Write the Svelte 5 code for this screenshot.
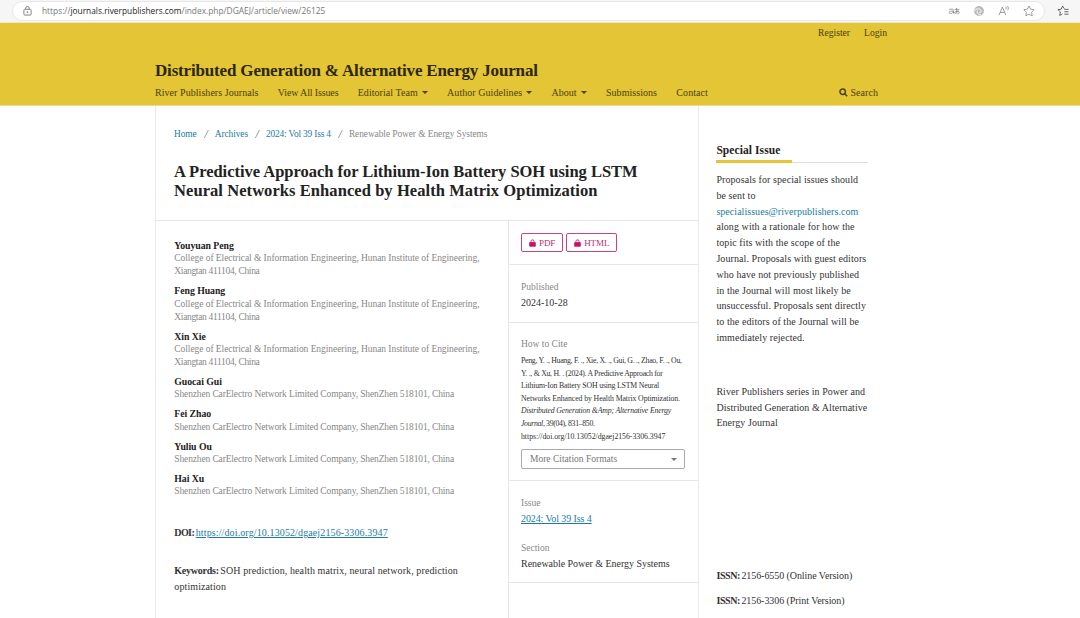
<script lang="ts">
	type Author = { name: string; lines: string[] };

	const hunan = ['College of Electrical & Information Engineering, Hunan Institute of Engineering,', 'Xiangtan 411104, China'];
	const shenzhen = ['Shenzhen CarElectro Network Limited Company, ShenZhen 518101, China'];

	const authors: Author[] = [
		{ name: 'Youyuan Peng', lines: hunan },
		{ name: 'Feng Huang', lines: hunan },
		{ name: 'Xin Xie', lines: hunan },
		{ name: 'Guocai Gui', lines: shenzhen },
		{ name: 'Fei Zhao', lines: shenzhen },
		{ name: 'Yuliu Ou', lines: shenzhen },
		{ name: 'Hai Xu', lines: shenzhen }
	];

	const nav = [
		{ label: 'River Publishers Journals', menu: false },
		{ label: 'View All Issues', menu: false },
		{ label: 'Editorial Team', menu: true },
		{ label: 'Author Guidelines', menu: true },
		{ label: 'About', menu: true },
		{ label: 'Submissions', menu: false },
		{ label: 'Contact', menu: false }
	];

	const galleys = ['PDF', 'HTML'];
	const crumbs = ['Home', 'Archives', '2024: Vol 39 Iss 4'];

	const proposal = [
		'along with a rationale for how the',
		'topic fits with the scope of the',
		'Journal. Proposals with guest editors',
		'who have not previously published',
		'in the Journal will most likely be',
		'unsuccessful. Proposals sent directly',
		'to the editors of the Journal will be',
		'immediately rejected.'
	];
</script>

<div class="page">
	<div class="browser">
		<div class="address">
			<svg class="lock" viewBox="0 0 10 11" aria-hidden="true">
				<rect x="1" y="3.6" width="8" height="6.4" rx="1" />
				<path d="M3 3.6V2.4a2 2 0 0 1 4 0v1.2" />
				<circle cx="5" cy="6.8" r=".6" />
			</svg>
			<span class="url">https://<b>journals.riverpublishers.com</b>/index.php/DGAEJ/article/view/26125</span>
			<div class="tools">
				<svg viewBox="0 0 12 12" aria-hidden="true">
					<path d="M1.2 4.2h3.2c1 0 1 .8 1 1.4v3M5.2 6.2H2.8c-2.2 0-2 2.4-.4 2.4 1.4 0 2.8-.8 2.8-2M6.6 4.4h4.6M8.6 3v3.2c0 2-2 3-2.2 1.4-.1-1.2 4.8-2.3 4.8 0 0 1-.8 1.4-1.8 1.4M10.2 5.4c-.4 1.6-1.4 2.6-2.4 3" />
				</svg>
				<svg viewBox="0 0 12 12" aria-hidden="true">
					<circle class="disc" cx="6" cy="6" r="4.9" />
					<path class="swirl" d="M1.6 5.6c1.6-2.4 6.2-2.4 6.6.4.2 1.6-1.2 1.8-2 1.2M4.6 5.6c-1.2 2 .4 4.4 3.4 4.2" />
				</svg>
				<svg viewBox="0 0 12 12" aria-hidden="true">
					<path d="M1 10.2 4.4 2l3.4 8.2M2.2 7.4h4.4M7.6 1.8c.8.6.8 1.8.2 2.6M9.4 1c1.2 1.2 1.2 3 .2 4.2" />
				</svg>
				<svg viewBox="0 0 12 12" aria-hidden="true">
					<path d="m6 .9 1.6 3.3 3.6.5-2.6 2.5.6 3.6L6 9.1l-3.2 1.7.6-3.6L.8 4.7l3.6-.5z" />
				</svg>
			</div>
		</div>
		<svg class="favorites" viewBox="0 0 12 12" aria-hidden="true">
			<path d="M7.4 3.8 5.6 1 4.2 4.2.9 4.6l2.5 2.3-.7 3.5 2.7-1.5M7.4 4.4h4.1M7.4 6.8h4.1M7.4 9.2h4.1" />
		</svg>
	</div>

	<header>
		<div class="wrap">
			<div class="account"><a href="#register">Register</a><a href="#login">Login</a></div>
			<div class="brand">Distributed Generation &amp; Alternative Energy Journal</div>
			<nav>
				{#each nav as item}
					<a href="#nav">{item.label}{#if item.menu}<i class="caret"></i>{/if}</a>
				{/each}
				<a class="search" href="#search">
					<svg viewBox="0 0 10 10" aria-hidden="true"><circle cx="4.1" cy="4.1" r="3" /><path d="m6.4 6.4 2.7 2.7" /></svg>Search
				</a>
			</nav>
		</div>
	</header>

	<div class="wrap content">
		<main>
			<div class="top">
				<div class="crumbs">
					{#each crumbs as crumb}
						<a href="#crumb">{crumb}</a>
						<svg class="slash" viewBox="0 0 18 16" aria-hidden="true"><path d="m7.4 12 4-8" /></svg>
					{/each}
					<span>Renewable Power &amp; Energy Systems</span>
				</div>
				<h1>
					<span>A Predictive Approach for Lithium-Ion Battery SOH using LSTM</span>
					<span>Neural Networks Enhanced by Health Matrix Optimization</span>
				</h1>
			</div>

			<div class="row">
				<article>
					<ul class="authors">
						{#each authors as author}
							<li>
								<strong>{author.name}</strong>
								{#each author.lines as line}
									<span class:short={line.length < 30} class:single={author.lines.length === 1}>{line}</span>
								{/each}
							</li>
						{/each}
					</ul>
					<div class="doi"><b>DOI:</b> <a href="#doi">https://doi.org/10.13052/dgaej2156-3306.3947</a></div>
					<div class="keywords"><b>Keywords:</b> SOH prediction, health matrix, neural network, prediction<br />optimization</div>
				</article>

				<aside class="details">
					<section class="galleys">
						{#each galleys as galley}
							<a href="#galley">
								<svg viewBox="0 0 8 9" aria-hidden="true"><path class="body" d="M.8 4h6.4v4.2H.8z" /><path class="shackle" d="M2.2 4V2.7a1.8 1.8 0 0 1 3.6 0V4" /></svg>{galley}
							</a>
						{/each}
					</section>
					<section class="published">
						<h2>Published</h2>
						<p>2024-10-28</p>
					</section>
					<section class="cite">
						<h2>How to Cite</h2>
						<div class="citation">
							<div>Peng, Y. ., Huang, F. ., Xie, X. ., Gui, G. ., Zhao, F. ., Ou,</div>
							<div>Y. ., &amp; Xu, H. . (2024). A Predictive Approach for</div>
							<div>Lithium-Ion Battery SOH using LSTM Neural</div>
							<div>Networks Enhanced by Health Matrix Optimization.</div>
							<div><em>Distributed Generation &amp;Amp; Alternative Energy</em></div>
							<div><em>Journal</em>, 39(04), 831–850.</div>
							<div>https://doi.org/10.13052/dgaej2156-3306.3947</div>
						</div>
						<button>More Citation Formats<i class="caret"></i></button>
					</section>
					<section class="issue">
						<h2>Issue</h2>
						<p><a href="#issue">2024: Vol 39 Iss 4</a></p>
						<h2 class="second">Section</h2>
						<p>Renewable Power &amp; Energy Systems</p>
					</section>
				</aside>
			</div>
		</main>

		<aside class="sidebar">
			<h3>Special Issue</h3>
			<p>
				Proposals for special issues should<br />be sent to<br />
				<a href="#mail">specialissues@riverpublishers.com</a>
				{#each proposal as line}
					<br />{line}
				{/each}
			</p>
			<p class="series">River Publishers series in Power and<br />Distributed Generation &amp; Alternative<br />Energy Journal</p>
			<p class="issn"><b>ISSN:</b> 2156-6550 (Online Version)</p>
			<p class="issn"><b>ISSN:</b> 2156-3306 (Print Version)</p>
		</aside>
	</div>
</div>

<style>
	:global(body) {
		background: #fff;
	}

	.page {
		width: 1080px;
		height: 618px;
		overflow: hidden;
		display: flex;
		flex-direction: column;
		font: 10px/16px 'Liberation Serif', serif;
		color: #333;
		white-space: nowrap;
	}

	.page * {
		box-sizing: border-box;
	}

	a {
		color: #1c7ba3;
		text-decoration: none;
	}

	h1,
	h2,
	h3,
	p,
	ul {
		margin: 0;
		padding: 0;
	}

	svg {
		fill: none;
		stroke: currentColor;
		flex: none;
	}

	.browser {
		height: 23px;
		flex: none;
		display: flex;
		align-items: flex-start;
		background: #f6f6f6;
		padding: 1px 11px 0 12px;
		border-bottom: 1px solid #eee8cf;
	}

	.address {
		width: 1033px;
		height: 20px;
		display: flex;
		align-items: center;
		padding: 0 9px 0 10px;
		background: #fff;
		border: 1px solid #e8e8e8;
		border-radius: 10px;
		color: #777;
	}

	.lock {
		width: 9px;
		height: 10px;
	}

	.url {
		margin-left: 10px;
		font: 8.35px/18px 'Open Sans', sans-serif;
		color: #777;
	}

	.url b {
		font-weight: 400;
		color: #222;
	}

	.tools {
		margin-left: auto;
		display: flex;
		gap: 13px;
		color: #888;
	}

	.tools svg,
	.favorites {
		width: 12px;
		height: 12px;
		stroke-width: 0.8;
	}

	.disc {
		fill: #bbb;
		stroke: none;
	}

	.tools .swirl {
		stroke: #fff;
		stroke-width: 1;
	}

	.favorites {
		margin: 4px 0 0 12px;
		color: #444;
	}

	header {
		height: 83px;
		flex: none;
		background: #e3c536;
		border-bottom: 1px solid #eadb93;
	}

	header a {
		color: #4b4112;
	}

	.wrap {
		margin-left: 155px;
		width: 732px;
	}

	.account {
		display: flex;
		justify-content: flex-end;
		gap: 14px;
		padding-top: 2px;
		font-size: 9.6px;
	}

	.brand {
		margin-top: 20px;
		font-size: 17px;
		line-height: 20px;
		font-weight: 700;
		letter-spacing: -0.17px;
		color: #2d2708;
	}

	nav {
		display: flex;
		gap: 19.3px;
		margin-top: 4px;
		padding-right: 9px;
		letter-spacing: 0.05px;
	}

	nav a:nth-child(2) {
		letter-spacing: -0.14px;
	}

	.caret {
		display: inline-block;
		margin-left: 4px;
		border: 3px solid transparent;
		border-top-color: currentColor;
		border-bottom: 0;
		vertical-align: 2px;
	}

	.search {
		margin-left: auto;
	}

	.search svg {
		width: 9px;
		height: 9px;
		margin-right: 2px;
		stroke-width: 1.7;
		vertical-align: -1px;
	}

	.content {
		flex: 1;
		display: flex;
	}

	main {
		width: 544px;
		display: flex;
		flex-direction: column;
		border: solid #e9e9e9;
		border-width: 0 1px;
	}

	.top {
		height: 115px;
		flex: none;
		padding: 20px 18px 0;
		border-bottom: 1px solid #e6e6e6;
	}

	.crumbs {
		display: flex;
		color: #888;
		font-size: 9.4px;
		letter-spacing: -0.06px;
	}

	.crumbs a:nth-of-type(3) {
		letter-spacing: -0.17px;
	}

	.slash {
		width: 18px;
		height: 16px;
		stroke-width: 0.8;
	}

	h1 {
		margin-top: 20px;
		font-size: 16.5px;
		line-height: 19px;
		color: #222;
	}

	h1 span {
		display: block;
		letter-spacing: -0.02px;
	}

	h1 span + span {
		letter-spacing: 0.07px;
	}

	.row {
		flex: 1;
		display: flex;
	}

	article {
		width: 352px;
		flex: none;
		padding: 18px 0 0 18.3px;
	}

	.authors {
		list-style: none;
		display: flex;
		flex-direction: column;
		gap: 5.8px;
		line-height: 13.2px;
	}

	.authors li {
		display: flex;
		flex-direction: column;
		color: #888;
		font-size: 9.5px;
		letter-spacing: -0.06px;
	}

	.authors .short {
		letter-spacing: -0.33px;
	}

	.authors .single {
		letter-spacing: -0.135px;
	}

	.authors strong {
		font-size: 9.8px;
		color: #222;
	}

	.doi {
		margin-top: 27px;
		letter-spacing: 0.12px;
	}

	.doi b {
		letter-spacing: -0.6px;
		margin-right: -1px;
	}

	.doi a,
	.issue a {
		text-decoration: underline;
	}

	.keywords {
		margin-top: 22px;
		letter-spacing: 0.1px;
	}

	.keywords b {
		letter-spacing: -0.25px;
		margin-right: -1px;
	}

	.details {
		flex: 1;
		border-left: 1px solid #e6e6e6;
	}

	.details section {
		padding-left: 12px;
		border-bottom: 1px solid #e6e6e6;
	}

	.details .galleys {
		height: 44px;
		display: flex;
		gap: 3px;
		padding-top: 12px;
	}

	.galleys a {
		height: 19px;
		display: flex;
		align-items: center;
		padding: 0 7px;
		border: 1px solid #c8437f;
		border-radius: 2px;
		color: #b7306f;
		font-size: 9px;
		letter-spacing: -0.1px;
	}

	.galleys svg {
		width: 7px;
		height: 8px;
		margin-right: 3px;
		color: #c9106a;
	}

	.galleys .body {
		fill: currentColor;
	}

	h2 {
		font-size: 9.5px;
		line-height: 16px;
		font-weight: 400;
		color: #888;
	}

	.published {
		height: 58px;
		padding-top: 14px;
	}

	.cite {
		height: 158px;
		padding-top: 13px;
	}

	.citation {
		margin-top: 3px;
		font-size: 7.8px;
		line-height: 12.6px;
		letter-spacing: -0.18px;
	}

	.citation div:nth-child(-n + 2) {
		letter-spacing: -0.28px;
	}

	.citation div:nth-child(4) {
		letter-spacing: -0.1px;
	}

	.citation div:nth-child(6) {
		letter-spacing: -0.34px;
	}

	.citation div:nth-child(7) {
		letter-spacing: -0.03px;
	}

	.cite button {
		width: 164px;
		height: 20px;
		display: flex;
		align-items: center;
		justify-content: space-between;
		margin-top: 6px;
		padding: 0 7px 0 8px;
		background: #fff;
		border: 1px solid #aaa;
		border-radius: 2px;
		font: inherit;
		font-size: 9.5px;
		color: #777;
	}

	.issue {
		height: 102px;
		padding-top: 14px;
	}

	.issue p {
		letter-spacing: -0.04px;
	}

	.issue a {
		letter-spacing: -0.1px;
	}

	.second {
		margin-top: 12.5px;
	}

	.sidebar {
		padding: 36px 0 0 17.4px;
		line-height: 15.8px;
		letter-spacing: 0.08px;
	}

	.sidebar a {
		letter-spacing: 0.04px;
	}

	h3 {
		width: 152px;
		height: 21px;
		margin-bottom: 9px;
		font-size: 11.5px;
		line-height: 17px;
		color: #222;
		/* yellow half underline over the thin rule */
		background:
			linear-gradient(#e3c536, #e3c536) 0 100% / 76px 3px no-repeat,
			linear-gradient(#ddd, #ddd) 0 100% / 100% 1px no-repeat;
	}

	.series {
		margin-top: 38px;
		letter-spacing: 0.05px;
	}

	.issn {
		letter-spacing: -0.07px;
	}

	.issn b {
		letter-spacing: -0.4px;
		margin-right: -1px;
	}

	.series + .issn {
		margin-top: 137px;
	}

	.issn + .issn {
		margin-top: 9px;
	}
</style>
